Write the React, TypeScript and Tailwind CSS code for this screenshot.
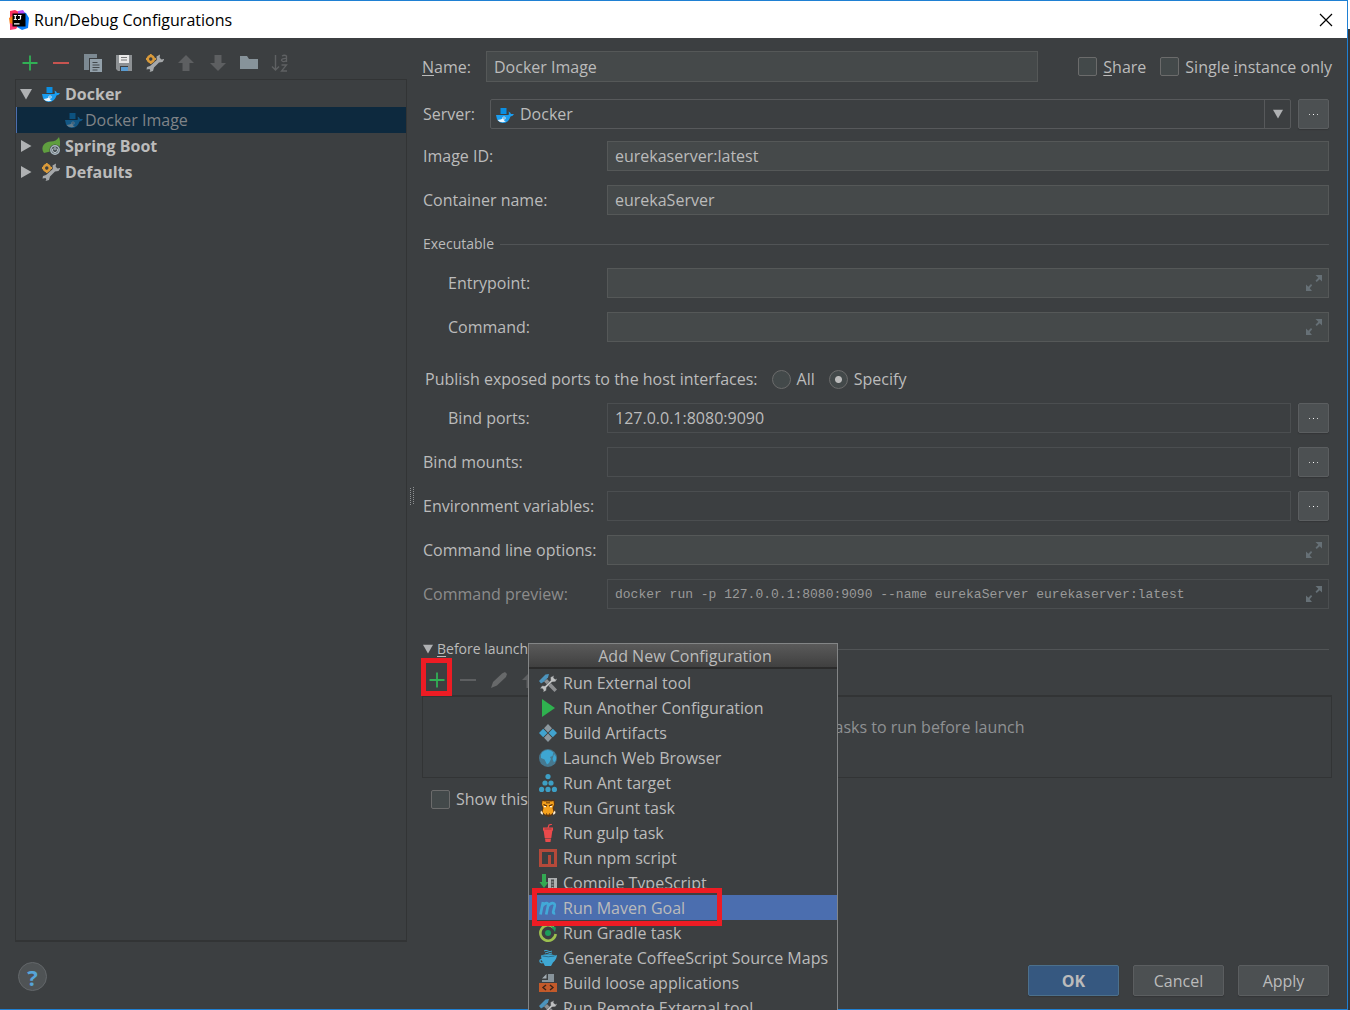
import { useState } from "react";
import type { ReactNode } from "react";
import clsx from "clsx";

type IconProps = { className?: string };

function Icon({ className, children }: IconProps & { children: ReactNode }) {
  return (
    <svg viewBox="0 0 18 18" aria-hidden="true" className={clsx("size-[18px] shrink-0", className)}>
      {children}
    </svg>
  );
}

const IdeaLogo = () => (
  <svg viewBox="0 0 20 20" aria-hidden="true" className="size-5 shrink-0">
    <path d="M1 1l5-1 4 2-1 9-6 3-2-5z" fill="#fe315d" />
    <path d="M0 8l5-3v9l-4 1z" fill="#f97a12" />
    <path d="M1 13l8 3-2 3-6 1z" fill="#fe3a75" />
    <path d="M11 1l6 2 3 5-1 10-6 2-5-3z" fill="#087cfa" />
    <path d="M9 1l5-1 2 3-7 2z" fill="#b74af7" />
    <path d="M3.500 3.500h13v13h-13z" fill="#000" />
    <path d="M4.800 5.500h3M6.300 5.500v4M4.800 9.500h3M9 5.500h3.500M11.500 5.500v3q0 1-1.500 1H9M5 13.800h5.500" stroke="#fff" strokeWidth="1.200" fill="none" />
  </svg>
);

const PlusIcon = () => (
  <Icon>
    <path d="M9 1.500v15M1.500 9h15" stroke="#31b055" strokeWidth="1.800" />
  </Icon>
);

const MinusIcon = ({ className = "text-[#c75450]" }: IconProps) => (
  <Icon className={className}>
    <path d="M1 9h16" stroke="currentColor" strokeWidth="2" />
  </Icon>
);

const CopyIcon = () => (
  <Icon>
    <path d="M0 0h13v4H5v12H0z" fill="#7c8992" />
    <path d="M6 5h12v13H6z" fill="#93a1ab" />
    <path d="M8.500 8.500h5M8.500 11h7M8.500 13.500h7M8.500 16h5" stroke="#43494d" strokeWidth="1.100" />
  </Icon>
);

const SaveIcon = () => (
  <Icon>
    <path d="M1 1h16v16H3l-2-2z" fill="#8d9194" />
    <path d="M4 1h10v8H4z" fill="#e8e8e8" />
    <path d="M6 3.500h6M6 6h6" stroke="#77797b" />
    <path d="M5 12h8v5H5z" fill="#3d4042" />
    <path d="M6 13h7v4H6z" fill="#5a9bd0" />
  </Icon>
);

const SettingsIcon = () => (
  <Icon>
    <circle cx="4.800" cy="5" r="3" fill="none" stroke="#d99a3a" strokeWidth="2.600" />
    <path d="M4.800 0v2M4.800 8v2M0 5h1M9 5h1" stroke="#d99a3a" strokeWidth="1.800" />
    <path
      d="M14 .500l-3.500 2 .300 3.500L4 12l-3 1-.500 2.500 3-.500.800 1.500L3.500 18l3.500-1 1-3.500 5-5 3.500-.500L18.500 5l-3 .500-1.800-1.800z"
      fill="#a5a8aa"
    />
  </Icon>
);

const ArrowUpIcon = () => (
  <Icon className="text-[#5d5f61]">
    <path d="M9 1l8 8h-4.500v8h-7V9H1z" fill="currentColor" />
  </Icon>
);

const ArrowDownIcon = () => (
  <Icon className="text-[#5d5f61]">
    <path d="M9 17l8-8h-4.500V1h-7v8H1z" fill="currentColor" />
  </Icon>
);

const FolderIcon = () => (
  <Icon>
    <path d="M0 2h7l2 3h9v10H0z" fill="#87939a" />
  </Icon>
);

const SortIcon = () => (
  <Icon>
    <path d="M4.500 1v15M1 12.500l3.500 3.500L8 12.500" stroke="#5f6163" strokeWidth="1.400" fill="none" />
    <path d="M11 2q2.500-1.500 4.500 0V8M15.500 4.500q-5-.300-5 1.800 1.500 2.700 5 .200" stroke="#5f6163" strokeWidth="1.300" fill="none" />
    <path d="M10.500 11h5L10.500 17h5.500" stroke="#5f6163" strokeWidth="1.300" fill="none" />
  </Icon>
);

const DockerIcon = ({ className }: IconProps) => (
  <Icon className={className}>
    <path d="M4.500 2h6v6h-6z" fill="#0b8fe3" />
    <path d="M0 9h12.500q.800-1.500 0-3.500 2 .500 2.500 2.500h3q-1 2-3.500 2.500Q12.500 17 7 17 1 17 0 9z" fill="#1a9df0" />
    <path d="M1.500 14q3-.300 5.500-1.500 1 2.500 3 3-5.500 2-8.500-1.500z" fill="#e9f5fd" />
    <circle cx="8" cy="12" r="1.600" fill="#fff" />
    <circle cx="8" cy="12" r=".8" fill="#0b6cad" />
  </Icon>
);

const SpringIcon = () => (
  <Icon>
    <path d="M17 0q2 6 .500 10Q14 15 8 14.500L2 16Q-1 12 1.500 8 4 4.500 9 4.500q5 0 8-4.500z" fill="#5f9e3f" />
    <circle cx="13" cy="13" r="5.500" fill="#3c3f41" />
    <circle cx="13" cy="13" r="4.200" fill="#4a5358" stroke="#a9b7c0" strokeWidth="1.500" />
    <path d="M13 10v3M11.200 11.500a2.500 2.500 0 1 0 3.600 0" stroke="#c8d2d8" fill="none" />
  </Icon>
);

const ExternalToolIcon = () => (
  <Icon>
    <path d="M5 7.500l10.500 10.500 2.500-2.500L8 5z" fill="#8d8f91" />
    <path d="M0 7L6.500.500 10 0l-1 3.500L4.500 8 2 9.500z" fill="#4c94bd" />
    <path
      d="M15 1.500l-3.500 1.800.200 3.200-5.700 5.500-3-.200-2 3 2.300-.300 1.200 1.500-.300 2.300 3-1.800.300-3 5.500-5.500 3.300-.200 2-3-2.300.500-1.500-1.500z"
      fill="#bfc1c2"
      stroke="#3c3f41"
      strokeWidth=".4"
    />
  </Icon>
);

const RunIcon = () => (
  <Icon>
    <path d="M3 0l13 9L3 18z" fill="#2fb14f" />
  </Icon>
);

const ArtifactsIcon = () => (
  <Icon>
    <path d="M9 0l4 4.200-4 4.200-4-4.200zM9 9.600l4 4.200L9 18l-4-4.200z" fill="#8b979e" />
    <path d="M4.200 4.800L8.400 9l-4.200 4.200L0 9zM13.800 4.800L18 9l-4.200 4.200L9.600 9z" fill="#41a3cf" />
  </Icon>
);

const BrowserIcon = () => (
  <Icon>
    <circle cx="9" cy="9" r="9" fill="#46788f" />
    <path d="M3.500 3q4-3 8-1.500l3 2-1 3.500-2.500 1 1 2-2 4-2 1.500-2.500-5L2 9V5.500z" fill="#3ea6d2" />
    <path d="M15 5l2 2.500V11l-2 2.500-1.500-3.500z" fill="#3ea6d2" />
  </Icon>
);

const AntIcon = () => (
  <Icon className="text-[#3d9fc5]">
    {[
      [9, 2.600],
      [6, 9],
      [12, 9],
      [2.600, 15.400],
      [9, 15.400],
      [15.400, 15.400],
    ].map(([cx, cy]) => (
      <circle key={`${cx}-${cy}`} cx={cx} cy={cy} r="2.600" fill="currentColor" />
    ))}
  </Icon>
);

const GruntIcon = () => (
  <Icon>
    <path d="M2.500.500l3.500.500 3-.500 3 .500 3.500-.500.500 5-1 3 1.500 5-3.500 3-3.500 1.500-3.500-1.500L2 13.500l1.500-5-1-3z" fill="#5b3614" />
    <path d="M3.500 2l2.500.500 3-.500 3 .500 2.500-.500.500 3.500L13.500 9l1 4-2.500 2.500H6L3.500 13l1-4L3 5.500z" fill="#f5a11d" />
    <path d="M4.500 5.500l3.500 1.500M13.500 5.500L10 7M7 15h1M10 15h1M8 2.500v2M10 2.500v2" stroke="#43230b" strokeWidth="1.100" />
    <path d="M5 7h2v1.200H5zM11 7h2v1.200h-2zM2 11.500l2 2.500-.500 2L1.500 14zM16 11.500L14 14l.500 2 2-2z" fill="#fff3dc" />
  </Icon>
);

const GulpIcon = () => (
  <Icon className="text-[#eb4a4b]">
    <path d="M9 4l1-3 3-.800" stroke="currentColor" strokeWidth="1.200" fill="none" />
    <path d="M4 3.500h10V6l-.500 1h-9L4 6zM4.700 7h8.600l-1 7H5.700zM6 14.500h6l-.500 3.500h-5z" fill="currentColor" />
    <path d="M5.500 5h7" stroke="#8a3a3b" strokeWidth=".8" />
  </Icon>
);

const NpmIcon = () => (
  <Icon>
    <path d="M0 0h18v18H0z" fill="#b5493a" />
    <path d="M3 3h12v12h-3V6H9v9H3z" fill="#3c3f41" />
    <path d="M4 4h10v10h-2V6H9v8H4z" fill="#3c3f41" />
  </Icon>
);

const TypeScriptIcon = () => (
  <Icon>
    <path d="M3 0h4v8h2.500L5 14 .500 8H3z" fill="#33a852" />
    <path d="M9 4h9v14H9z" fill="#aeb0b1" />
    <path d="M12 5.500h3v10h-3z" fill="#4b4e50" />
    <path d="M12.500 8h2M12.500 11h2M12.500 13.500h2" stroke="#aeb0b1" />
  </Icon>
);

const MavenIcon = () => (
  <Icon>
    <path
      d="M4 3L1.500 15.500M3 7.500Q5.500 4 7.800 4.200q1.700.200 1.200 2.800L7.200 15.500M8.700 7.500q2.500-3.500 5-3.300 2.500.200 2 2.800l-1.500 6q-.300 1.700 2 1.200"
      stroke="#42a9d8"
      strokeWidth="2.700"
      fill="none"
    />
  </Icon>
);

const GradleIcon = () => (
  <Icon>
    <path d="M14.500 3.500A7.700 7.700 0 1 0 16.700 10" stroke="#9cc04f" strokeWidth="2.600" fill="none" />
    <path d="M12 2l5 1.500-1 4.500z" fill="#1c9d5b" />
    <circle cx="9" cy="9" r="3" fill="#1c9d5b" />
  </Icon>
);

const CoffeeIcon = () => (
  <Icon className="text-[#3fa8d4]">
    <path d="M5 2q2-1.500 4 0t4 0M6 4q2-1.200 3.500 0t3.500 0" stroke="currentColor" fill="none" />
    <path d="M2 6.500q7-2.500 14.500 0L18 6q-.500 5-4 7.500L12 17H6l-2-3.500Q2.500 12 2 6.500z" fill="currentColor" />
    <path d="M3 10.500q-2.500 0-2 2t3.500 1" stroke="currentColor" strokeWidth="1.300" fill="none" />
    <path d="M3.500 7q5.500 1.500 12 0" stroke="#2a6f8d" fill="none" />
  </Icon>
);

const LooseAppIcon = () => (
  <Icon>
    <path d="M9 0h6v8H3V6h6z" fill="#87939a" />
    <path d="M3 4.500L7.500 0v4.500z" fill="#a3adb3" />
    <path d="M0 9h18v9H0z" fill="#c35a2a" />
    <path d="M7 11l-3 2.500L7 16M11 11l3 2.500L11 16" stroke="#3b2418" strokeWidth="1.400" fill="none" />
  </Icon>
);

const EditIcon = () => (
  <Icon className="text-[#67696a]">
    <path d="M1 17l2-6L12 2.500 15 1l2 2-1 3-9 8.500z" fill="currentColor" />
  </Icon>
);

const ExpandIcon = () => (
  <svg viewBox="0 0 16 16" aria-hidden="true" className="size-4 text-[#667076]">
    <path d="M9.500 0H16v6.500l-2.300-2.200-3 2.700-1.200-1.200 2.800-3zM0 9.500l2.300 2.300 2.700-2.800L6.200 10.200l-2.500 3L6 16H0z" fill="currentColor" />
  </svg>
);

const Triangle = ({ open, className }: { open: boolean; className: string }) => (
  <svg viewBox="0 0 12 12" aria-hidden="true" className={clsx("shrink-0 text-[#afb1b3]", className)}>
    <path d={open ? "M0 1h12L6 11.500z" : "M1 0v12l10.500-6z"} fill="currentColor" />
  </svg>
);

const toolbar = [
  { label: "Add", icon: <PlusIcon /> },
  { label: "Remove", icon: <MinusIcon /> },
  { label: "Copy", icon: <CopyIcon /> },
  { label: "Save", icon: <SaveIcon /> },
  { label: "Edit defaults", icon: <SettingsIcon /> },
  { label: "Move up", icon: <ArrowUpIcon /> },
  { label: "Move down", icon: <ArrowDownIcon /> },
  { label: "New folder", icon: <FolderIcon /> },
  { label: "Sort", icon: <SortIcon /> },
];

const menuItems = [
  { label: "Run External tool", icon: <ExternalToolIcon /> },
  { label: "Run Another Configuration", icon: <RunIcon /> },
  { label: "Build Artifacts", icon: <ArtifactsIcon /> },
  { label: "Launch Web Browser", icon: <BrowserIcon /> },
  { label: "Run Ant target", icon: <AntIcon /> },
  { label: "Run Grunt task", icon: <GruntIcon /> },
  { label: "Run gulp task", icon: <GulpIcon /> },
  { label: "Run npm script", icon: <NpmIcon /> },
  { label: "Compile TypeScript", icon: <TypeScriptIcon /> },
  { label: "Run Maven Goal", icon: <MavenIcon /> },
  { label: "Run Gradle task", icon: <GradleIcon /> },
  { label: "Generate CoffeeScript Source Maps", icon: <CoffeeIcon /> },
  { label: "Build loose applications", icon: <LooseAppIcon /> },
  { label: "Run Remote External tool", icon: <ExternalToolIcon /> },
];

function MoreButton({ label }: { label: string }) {
  return (
    <button
      type="button"
      aria-label={label}
      className="flex h-[30px] w-[31px] shrink-0 items-center justify-center gap-[3px] rounded-xs border border-[#5b5e60] bg-[#4c5052] shadow-[0_1px_1px_#333638]"
    >
      <span className="size-px bg-[#d0d0d0]" />
      <span className="size-px bg-white" />
      <span className="size-px bg-[#d0d0d0]" />
    </button>
  );
}

type FieldProps = {
  id: string;
  label: string;
  value?: string;
  kind?: "plain" | "expand" | "browse";
  indent?: boolean;
  preview?: boolean;
};

function Field({ id, label, value = "", kind = "plain", indent, preview }: FieldProps) {
  return (
    <div className="flex h-[30px] items-center">
      <label htmlFor={id} className={clsx("w-[184px] shrink-0", indent && "pl-[25px]", preview && "text-[#8c8c8c]")}>
        {label}
      </label>
      <div className="relative flex flex-1 items-center gap-[7px]">
        <input
          id={id}
          defaultValue={value}
          readOnly={preview}
          className={clsx(
            "h-[30px] min-w-0 flex-1 border px-[7px] outline-none",
            preview && "font-['Liberation_Mono',monospace] text-[13px] text-[#9a9a9a]",
            kind === "browse" || preview ? "border-[#4b4e50] bg-[#3c3f41]" : "border-[#555858] bg-[#45494a]"
          )}
        />
        {kind === "expand" && (
          <button type="button" aria-label={`Expand ${label}`} className="absolute right-[7px]">
            <ExpandIcon />
          </button>
        )}
        {kind === "browse" && <MoreButton label={`Browse ${label}`} />}
      </div>
    </div>
  );
}

const boxStyle = "size-[19px] shrink-0 appearance-none border border-[#6b6b6b] bg-[#43494a]";

export default function App() {
  const [ports, setPorts] = useState("specify");
  const [selected, setSelected] = useState("Run Maven Goal");

  return (
    <div className="flex h-screen overflow-hidden bg-[#3c3f41] font-['Open_Sans',sans-serif] text-base leading-5 text-[#bbbbbb]">
      <div className="flex min-w-0 flex-1 flex-col border-t border-r border-b border-[#1f80d3]">
        <header className="flex h-[37px] shrink-0 items-center bg-white pr-3.5 pl-[9px] text-black">
          <IdeaLogo />
          <h1 className="flex-1 pl-[5px]">Run/Debug Configurations</h1>
          <button type="button" aria-label="Close">
            <svg viewBox="0 0 14 14" aria-hidden="true" className="size-3.5">
              <path d="M1 1l12 12M13 1L1 13" stroke="#000" strokeWidth="1.200" />
            </svg>
          </button>
        </header>

        <div className="flex min-h-0 flex-1">
          <aside className="flex w-[407px] shrink-0 flex-col pl-[15px]">
            <div className="flex h-[41px] w-[274px] shrink-0 items-center justify-between pt-2 pl-1.5">
              {toolbar.map((t) => (
                <button key={t.label} type="button" aria-label={t.label}>
                  {t.icon}
                </button>
              ))}
            </div>
            <ul className="flex-1 border border-b-2 border-[#323435] pt-px font-bold leading-[26px]">
              <li>
                <div className="flex items-center pl-1">
                  <Triangle open className="size-3" />
                  <DockerIcon className="ml-2.5" />
                  <span className="pl-[5px]">Docker</span>
                </div>
                <div className="flex items-center border-l border-[#4b6eaf] bg-[#0d293e] pl-12 font-normal text-[#808488]">
                  <DockerIcon className="opacity-40" />
                  <span className="pl-[2px]">Docker Image</span>
                </div>
              </li>
              <li className="flex items-center pl-1">
                <Triangle open={false} className="size-3" />
                <span className="pl-2.5">
                  <SpringIcon />
                </span>
                <span className="pl-[5px]">Spring Boot</span>
              </li>
              <li className="flex items-center pl-1">
                <Triangle open={false} className="size-3" />
                <span className="pl-2.5">
                  <SettingsIcon />
                </span>
                <span className="pl-[5px]">Defaults</span>
              </li>
            </ul>
            <div className="h-[67px] shrink-0 pt-5 pl-[3px]">
              <button
                type="button"
                aria-label="Help"
                className="flex size-[29px] items-center justify-center rounded-full border border-[#63676a] bg-[#4f5355] text-[22px] font-bold text-[#56a4d8]"
              >
                ?
              </button>
            </div>
          </aside>

          <div className="grid w-[15px] shrink-0 content-center justify-center pr-1 pb-14">
            <svg viewBox="0 0 5 18" aria-hidden="true" className="h-[18px] w-[5px]">
              <path d="M.500 1v17M3.500 0v17" stroke="#8f9193" strokeDasharray="1 1" />
            </svg>
          </div>

          <main className="flex min-w-0 flex-1 flex-col pt-[13px] pr-[15px]">
            <div className="flex h-[31px] items-center">
              <label htmlFor="name" className="w-16 shrink-0">
                <u className="underline-offset-2">N</u>ame:
              </label>
              <input
                id="name"
                defaultValue="Docker Image"
                className="h-[31px] min-w-0 flex-1 border border-[#555858] bg-[#45494a] px-[7px] outline-none"
              />
              <label className="ml-10 flex items-center gap-1.5">
                <input type="checkbox" className={clsx(boxStyle, "rounded-xs")} />
                <span>
                  <u className="underline-offset-2">S</u>hare
                </span>
              </label>
              <label className="ml-3.5 flex items-center gap-1.5">
                <input type="checkbox" className={clsx(boxStyle, "rounded-xs")} />
                <span>
                  Single <u className="underline-offset-2">i</u>nstance only
                </span>
              </label>
            </div>

            <div className="flex flex-col gap-3.5 pt-[17px] pr-[3px] pl-px">
              <div className="-mb-[2px] flex h-[30px] items-center">
                <label htmlFor="server" className="w-[67px] shrink-0">
                  Server:
                </label>
                <div className="relative flex-1">
                  <select
                    id="server"
                    className="block h-[30px] w-full appearance-none rounded-xs border border-[#57595b] bg-[#3c3f41] pl-[29px] outline-none"
                  >
                    <option>Docker</option>
                  </select>
                  <DockerIcon className="pointer-events-none absolute top-[7px] left-1.5" />
                  <span className="pointer-events-none absolute inset-y-0 right-0 flex w-[27px] items-center justify-center border-l border-[#57595b]">
                    <Triangle open className="size-2.5" />
                  </span>
                </div>
                <div className="pl-[7px]">
                  <MoreButton label="Browse servers" />
                </div>
              </div>
              <Field id="image" label="Image ID:" value="eurekaserver:latest" />
              <Field id="container" label="Container name:" value="eurekaServer" />

              <fieldset className="flex flex-col gap-3.5">
                <div className="-mb-[5px] flex h-[30px] items-center gap-1.5 text-sm">
                  Executable
                  <span className="h-px flex-1 bg-[#515456]" />
                </div>
                <Field id="entrypoint" label="Entrypoint:" kind="expand" indent />
                <Field id="command" label="Command:" kind="expand" indent />
              </fieldset>

              <div className="mt-2 -mb-[5px] flex h-[30px] items-center pl-[2px]">
                <span>Publish exposed ports to the host interfaces:</span>
                <label className="ml-3.5 flex items-center gap-1.5">
                  <input
                    type="radio"
                    name="ports"
                    checked={ports === "all"}
                    onChange={() => setPorts("all")}
                    className={clsx(boxStyle, "rounded-full checked:bg-[radial-gradient(circle,#bbbbbb_3px,transparent_4px)]")}
                  />
                  All
                </label>
                <label className="ml-3.5 flex items-center gap-1.5">
                  <input
                    type="radio"
                    name="ports"
                    checked={ports === "specify"}
                    onChange={() => setPorts("specify")}
                    className={clsx(boxStyle, "rounded-full checked:bg-[radial-gradient(circle,#bbbbbb_3px,transparent_4px)]")}
                  />
                  Specify
                </label>
              </div>

              <Field id="bind-ports" label="Bind ports:" value="127.0.0.1:8080:9090" kind="browse" indent />
              <Field id="mounts" label="Bind mounts:" kind="browse" />
              <Field id="env" label="Environment variables:" kind="browse" />
              <Field id="options" label="Command line options:" kind="expand" />
              <Field
                id="preview"
                label="Command preview:"
                value="docker run -p 127.0.0.1:8080:9090 --name eurekaServer eurekaserver:latest"
                kind="expand"
                preview
              />
            </div>

            <section className="relative mt-[25px]">
              <div className="flex h-[30px] items-center pr-[3px] pl-px text-sm">
                <Triangle open className="size-2.5" />
                <h2 className="pr-1.5 pl-1">
                  <u className="underline-offset-2">B</u>efore launch
                </h2>
                <span className="h-px flex-1 bg-[#515456]" />
              </div>
              <div className="flex h-[31px] items-center gap-[13px] pl-1.5">
                <button type="button" aria-label="Add task">
                  <PlusIcon />
                </button>
                <button type="button" aria-label="Remove task">
                  <MinusIcon className="text-[#5d5f61]" />
                </button>
                <button type="button" aria-label="Edit task">
                  <EditIcon />
                </button>
                <button type="button" aria-label="Move task up">
                  <ArrowUpIcon />
                </button>
              </div>
              <div className="h-[83px] border border-t-2 border-[#323435] pt-5 text-center text-[#8f9193]">
                There are no tasks to run before launch
              </div>
              <label className="mt-1.5 flex h-[30px] items-center gap-1.5 pl-[9px]">
                <input type="checkbox" className={clsx(boxStyle, "rounded-xs")} />
                Show this page
              </label>

              <div className="absolute top-6 -left-px h-[38px] w-[31px] border-[5px] border-[#ed1c24]" />

              <div className="absolute top-[9px] left-[106px] w-[310px] border border-[#838586] bg-[#3c3f41]">
                <h3 className="h-[25px] border-b-2 border-[#2b2b2b] bg-linear-to-b from-[#5a5a5a] to-[#404040] pl-1 text-center leading-6">
                  Add New Configuration
                </h3>
                <ul className="pt-px">
                  {menuItems.map((item) => (
                    <li key={item.label}>
                      <button
                        type="button"
                        onClick={() => setSelected(item.label)}
                        className={clsx(
                          "flex h-[25px] w-full items-center gap-1.5 pl-2.5 whitespace-nowrap",
                          item.label === selected && "bg-[#4b6eaf]"
                        )}
                      >
                        {item.icon}
                        {item.label}
                      </button>
                    </li>
                  ))}
                </ul>
                <div className="absolute top-[244px] left-[3px] h-[38px] w-[190px] border-[5px] border-[#ed1c24]" />
              </div>
            </section>

            <footer className="mt-auto flex justify-end gap-3.5 pr-[3px] pb-[13px]">
              <button
                type="button"
                className="h-[31px] w-[91px] rounded-xs border border-[#4c708c] bg-[#365880] font-bold shadow-[0_1px_1px_#333638]"
              >
                OK
              </button>
              <button
                type="button"
                className="h-[31px] w-[91px] rounded-xs border border-[#5b5e60] bg-[#4c5052] shadow-[0_1px_1px_#333638]"
              >
                Cancel
              </button>
              <button
                type="button"
                className="h-[31px] w-[91px] rounded-xs border border-[#5b5e60] bg-[#4c5052] shadow-[0_1px_1px_#333638]"
              >
                Apply
              </button>
            </footer>
          </main>
        </div>
      </div>
      <div className="w-[2px] shrink-0 border-t-[29px] border-white bg-[#33363a]" />
    </div>
  );
}
